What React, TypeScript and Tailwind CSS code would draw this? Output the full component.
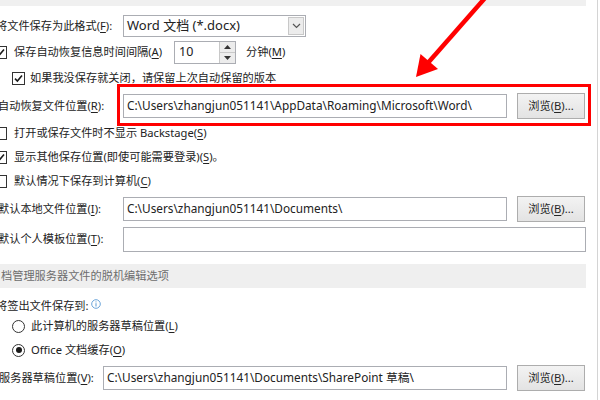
import React from "react";

const font = { fontFamily: '"Noto Sans", "Noto Sans CJK SC", sans-serif' };

const U: React.FC<{ children: React.ReactNode }> = ({ children }) => (
    <span className="underline underline-offset-2">{children}</span>
);

const Check: React.FC<{ checked?: boolean }> = ({ checked }) => (
    <span className="flex h-[13px] w-[13px] shrink-0 items-center justify-center border border-[#333333] bg-white">
        {checked && (
            <svg width="11" height="11" viewBox="0 0 11 11">
                <path d="M2 5.6 L4.4 8 L9 2.6" fill="none" stroke="#1a1a1a" strokeWidth="1.6" />
            </svg>
        )}
    </span>
);

const Radio: React.FC<{ checked?: boolean }> = ({ checked }) => (
    <span className="flex h-[13px] w-[13px] shrink-0 items-center justify-center rounded-full border border-[#333333] bg-white">
        {checked && <span className="h-[6px] w-[6px] rounded-full bg-[#1a1a1a]" />}
    </span>
);

const Browse: React.FC = () => (
    <button className="ml-[10px] flex h-[26px] w-[68px] shrink-0 items-center justify-center border border-[#adadad] bg-gradient-to-b from-[#f3f3f3] to-[#e3e3e3] text-[#262626]">
        浏览(<U>B</U>)...
    </button>
);

const Field: React.FC<{ value?: string; className?: string }> = ({ value, className }) => (
    <div className={`flex h-[24px] items-center border border-[#abadb3] bg-white px-[3px] ${className ?? ""}`}>
        {value}
    </div>
);

export default function App() {
    return (
        <div className="relative h-[400px] w-[600px] overflow-hidden bg-white text-[11.2px] text-[#222222]" style={font}>
            <div className="flex w-[586px] flex-col">
                <div className="h-[6px] bg-[#f0f0f0]" />

                {/* format */}
                <div className="mt-[8px] flex h-[24px] items-center">
                    <span className="ml-[-4px] w-[127px]">将文件保存为此格式(<U>F</U>):</span>
                    <div className="flex h-[22px] w-[183px] items-center border border-[#abadb3] bg-white">
                        <span className="flex-1 pl-[3px] text-[13px]">Word 文档 (*.docx)</span>
                        <span className="mr-[1px] flex h-[18px] w-[16px] items-center justify-center border border-[#c8c8c8] bg-[#ececec]">
                            <svg width="9" height="6" viewBox="0 0 9 6">
                                <path d="M1 1 L4.5 4.5 L8 1" fill="none" stroke="#555" strokeWidth="1.2" />
                            </svg>
                        </span>
                    </div>
                </div>

                {/* autosave interval */}
                <div className="mt-[2px] flex h-[24px] items-center">
                    <span className="ml-[-6px]"><Check checked /></span>
                    <span className="ml-[7px] w-[160px]">保存自动恢复信息时间间隔(<U>A</U>)</span>
                    <div className="flex h-[23px] w-[62px] items-center border border-[#abadb3] bg-white">
                        <span className="flex-1 pl-[4px] text-[12.5px]">10</span>
                        <span className="flex h-full w-[16px] flex-col border-l border-[#c8c8c8]">
                            <span className="flex flex-1 items-center justify-center border-b border-[#c8c8c8] bg-[#ececec]">
                                <svg width="7" height="4" viewBox="0 0 7 4"><path d="M0 4 L3.5 0 L7 4 Z" fill="#333" /></svg>
                            </span>
                            <span className="flex flex-1 items-center justify-center bg-[#ececec]">
                                <svg width="7" height="4" viewBox="0 0 7 4"><path d="M0 0 L3.5 4 L7 0 Z" fill="#333" /></svg>
                            </span>
                        </span>
                    </div>
                    <span className="ml-[10px]">分钟(<U>M</U>)</span>
                </div>

                <div className="mt-[2px] flex h-[24px] items-center pl-[12px]">
                    <Check checked />
                    <span className="ml-[5px]">如果我没保存就关闭，请保留上次自动保留的版本</span>
                </div>

                {/* autorecover location */}
                <div className="mt-[2px] flex h-[28px] items-center">
                    <span className="ml-[-2px] w-[125px]">自动恢复文件位置(<U>R</U>):</span>
                    <Field className="w-[384px] text-[11.8px]" value="C:\Users\zhangjun051141\AppData\Roaming\Microsoft\Word\" />
                    <Browse />
                </div>

                <div className="mt-[1px] flex h-[24px] items-center">
                    <span className="ml-[-6px]"><Check /></span>
                    <span className="ml-[7px]">打开或保存文件时不显示 Backstage(<U>S</U>)</span>
                </div>
                <div className="flex h-[24px] items-center">
                    <span className="ml-[-6px]"><Check checked /></span>
                    <span className="ml-[7px]">显示其他保存位置(即使可能需要登录)(<U>S</U>)。</span>
                </div>
                <div className="flex h-[24px] items-center">
                    <span className="ml-[-6px]"><Check /></span>
                    <span className="ml-[7px]">默认情况下保存到计算机(<U>C</U>)</span>
                </div>

                <div className="mt-[2px] flex h-[28px] items-center">
                    <span className="ml-[-2px] w-[125px]">默认本地文件位置(<U>I</U>):</span>
                    <Field className="w-[384px] text-[11.8px]" value="C:\Users\zhangjun051141\Documents\" />
                    <Browse />
                </div>
                <div className="mt-[2px] flex h-[28px] items-center">
                    <span className="ml-[-2px] w-[125px]">默认个人模板位置(<U>T</U>):</span>
                    <Field className="h-[25px] w-[463px]" />
                </div>

                <div className="mt-[11px] flex h-[24px] items-center bg-[#efefef] pl-[1px] text-[#6d6d6d]">
                    档管理服务器文件的脱机编辑选项
                </div>

                <div className="mt-[7px] flex h-[22px] items-center">
                    <span className="ml-[-4px]">将签出文件保存到:</span>
                    <svg className="ml-[2px] -mt-[4px]" width="10" height="10" viewBox="0 0 10 10">
                        <circle cx="5" cy="5" r="4.3" fill="none" stroke="#5b9bd5" strokeWidth="0.9" />
                        <rect x="4.5" y="4.2" width="1" height="3.3" fill="#5b9bd5" />
                        <rect x="4.5" y="2.4" width="1" height="1" fill="#5b9bd5" />
                    </svg>
                </div>
                <div className="flex h-[19px] items-center pl-[12px]">
                    <Radio />
                    <span className="ml-[6px]">此计算机的服务器草稿位置(<U>L</U>)</span>
                </div>
                <div className="flex h-[28px] items-center pl-[12px]">
                    <Radio checked />
                    <span className="ml-[6px]">Office 文档缓存(<U>O</U>)</span>
                </div>

                <div className="flex h-[28px] items-center">
                    <span className="ml-[-1px] w-[104px]">服务器草稿位置(<U>V</U>):</span>
                    <Field className="w-[404px] text-[11.8px]" value="C:\Users\zhangjun051141\Documents\SharePoint 草稿\" />
                    <Browse />
                </div>
            </div>

            <div className="absolute right-[2px] top-0 h-full w-px bg-[#d4d4d4]" />

            {/* annotation */}
            <div className="absolute left-[117px] top-[84px] h-[42px] w-[474px] border-[3px] border-[#ff0000]" />
            <svg className="absolute left-0 top-0" width="600" height="400" viewBox="0 0 600 400">
                <line x1="485" y1="-2" x2="427" y2="64" stroke="#ff0000" strokeWidth="4.5" />
                <polygon points="416,77 420.5,54 438,69" fill="#ff0000" />
            </svg>
        </div>
    );
}
